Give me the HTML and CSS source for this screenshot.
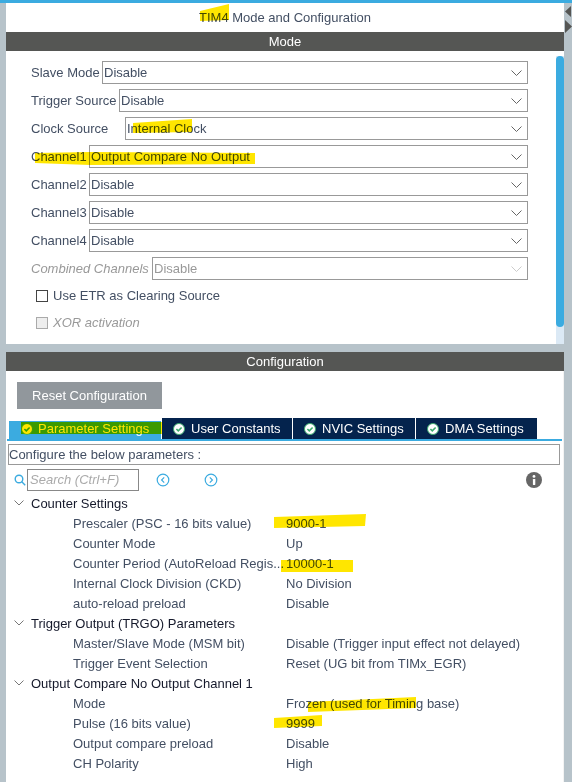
FILE: index.html
```html
<!DOCTYPE html>
<html lang="en">
<head>
    <meta charset="UTF-8">
    <title>TIM4 Mode and Configuration</title>
    <link rel="stylesheet" href="styles.css">
</head>
<body>
    <div class="page">
        <div class="main">
            <div class="title">TIM4 Mode and Configuration</div>
            <div class="bar">Mode</div>
            <div class="mode-panel">
                <div class="mode-form">
                    <div class="row"><span class="label l-slave">Slave Mode</span><div class="select">Disable<svg class="caret" viewBox="0 0 11 6"><path d="M.5.5l5 5 5-5"/></svg></div></div>
                    <div class="row"><span class="label l-trigger">Trigger Source</span><div class="select">Disable<svg class="caret" viewBox="0 0 11 6"><path d="M.5.5l5 5 5-5"/></svg></div></div>
                    <div class="row"><span class="label l-clock">Clock Source</span><div class="select">Internal Clock<svg class="caret" viewBox="0 0 11 6"><path d="M.5.5l5 5 5-5"/></svg></div></div>
                    <div class="row"><span class="label l-channel">Channel1</span><div class="select">Output Compare No Output<svg class="caret" viewBox="0 0 11 6"><path d="M.5.5l5 5 5-5"/></svg></div></div>
                    <div class="row"><span class="label l-channel">Channel2</span><div class="select">Disable<svg class="caret" viewBox="0 0 11 6"><path d="M.5.5l5 5 5-5"/></svg></div></div>
                    <div class="row"><span class="label l-channel">Channel3</span><div class="select">Disable<svg class="caret" viewBox="0 0 11 6"><path d="M.5.5l5 5 5-5"/></svg></div></div>
                    <div class="row"><span class="label l-channel">Channel4</span><div class="select">Disable<svg class="caret" viewBox="0 0 11 6"><path d="M.5.5l5 5 5-5"/></svg></div></div>
                    <div class="row row-off"><span class="label l-combined">Combined Channels</span><div class="select">Disable<svg class="caret" viewBox="0 0 11 6"><path d="M.5.5l5 5 5-5"/></svg></div></div>
                    <div class="check"><span class="box"></span>Use ETR as Clearing Source</div>
                    <div class="check check-off"><span class="box"></span>XOR activation</div>
                </div>
                <div class="scroll"><div class="thumb"></div></div>
            </div>
            <div class="bar bar-config">Configuration</div>
            <div class="config-panel">
                <button class="reset">Reset Configuration</button>
                <div class="tabs">
                    <div class="tab active"><svg class="ok" viewBox="0 0 12 12"><circle cx="6" cy="6" r="5.5"/><path d="M3.4 6l1.9 1.9 3.3-3.4"/></svg>Parameter Settings</div>
                    <div class="tab tab-user"><svg class="ok" viewBox="0 0 12 12"><circle cx="6" cy="6" r="5.5"/><path d="M3.4 6l1.9 1.9 3.3-3.4"/></svg>User Constants</div>
                    <div class="tab tab-nvic"><svg class="ok" viewBox="0 0 12 12"><circle cx="6" cy="6" r="5.5"/><path d="M3.4 6l1.9 1.9 3.3-3.4"/></svg>NVIC Settings</div>
                    <div class="tab tab-dma"><svg class="ok" viewBox="0 0 12 12"><circle cx="6" cy="6" r="5.5"/><path d="M3.4 6l1.9 1.9 3.3-3.4"/></svg>DMA Settings</div>
                </div>
                <div class="describe">Configure the below parameters :</div>
                <div class="search-row">
                    <svg class="lens" viewBox="0 0 12 12"><circle cx="5" cy="5" r="3.8"/><path d="M7.8 7.800l3.4 3.4"/></svg>
                    <div class="search">Search (Ctrl+F)</div>
                    <svg class="nav nav-prev" viewBox="0 0 14 14"><circle cx="7" cy="7" r="5.8"/><path d="M8.2 4.4L5.6 7l2.6 2.6"/></svg>
                    <svg class="nav nav-next" viewBox="0 0 14 14"><circle cx="7" cy="7" r="5.8"/><path d="M5.800 4.4L8.4 7 5.800 9.600"/></svg>
                    <svg class="info" viewBox="0 0 16 16"><circle cx="8" cy="8" r="8"/><rect x="6.9" y="7" width="2.4" height="6" rx=".4"/><circle class="dot" cx="8" cy="4.4" r="1.4"/></svg>
                </div>
                <div class="tree">
                    <div class="group"><svg class="fold" viewBox="0 0 10 6"><path d="M.5.5L5 5 9.500.5"/></svg>Counter Settings</div>
                    <div class="param"><span class="name">Prescaler (PSC - 16 bits value)</span><span>9000-1</span></div>
                    <div class="param"><span class="name">Counter Mode</span><span>Up</span></div>
                    <div class="param"><span class="name">Counter Period (AutoReload Regis...</span><span>10000-1</span></div>
                    <div class="param"><span class="name">Internal Clock Division (CKD)</span><span>No Division</span></div>
                    <div class="param"><span class="name">auto-reload preload</span><span>Disable</span></div>
                    <div class="group"><svg class="fold" viewBox="0 0 10 6"><path d="M.5.5L5 5 9.500.5"/></svg>Trigger Output (TRGO) Parameters</div>
                    <div class="param"><span class="name">Master/Slave Mode (MSM bit)</span><span>Disable (Trigger input effect not delayed)</span></div>
                    <div class="param"><span class="name">Trigger Event Selection</span><span>Reset (UG bit from TIMx_EGR)</span></div>
                    <div class="group"><svg class="fold" viewBox="0 0 10 6"><path d="M.5.5L5 5 9.500.5"/></svg>Output Compare No Output Channel 1</div>
                    <div class="param"><span class="name">Mode</span><span>Frozen (used for Timing base)</span></div>
                    <div class="param"><span class="name">Pulse (16 bits value)</span><span>9999</span></div>
                    <div class="param"><span class="name">Output compare preload</span><span>Disable</span></div>
                    <div class="param"><span class="name">CH Polarity</span><span>High</span></div>
                </div>
            </div>
        </div>
        <div class="side">
            <svg class="arrows" viewBox="0 0 8 30"><path d="M1 8.500L7 3v11zM1 17v13l7-6.500z"/></svg>
        </div>
    </div>

    <!-- marker strokes drawn over the screenshot -->
    <svg class="marker" viewBox="0 0 572 782">
        <polygon points="200,11 229,4 229,20 200,21"/>
        <polygon points="133,123 192,119 192,132 133,133"/>
        <polygon points="35,153 90,152 255,153 255,164 90,165 35,163"/>
        <polygon points="21,422 162,422 162,434 21,434"/>
        <polygon points="274,517 366,514 365,526 274,528"/>
        <polygon points="281,560 353,560 353,572 281,572"/>
        <polygon points="308,702 416,697 416,708 308,712"/>
        <polygon points="274,718 322,715 322,726 274,728"/>
    </svg>
</body>
</html>
```

FILE: styles.css
```css
* {
    box-sizing: border-box;
}
html, body {
    margin: 0;
    height: 782px;
    overflow: hidden;
}
body {
    position: relative;
    font-family: "Liberation Sans", Arial, sans-serif;
    font-size: 13px;
    color: #434f63;
    background: #b7c3ca;
}
.page {
    display: flex;
    height: 782px;
    padding-left: 6px;
    border-top: 3px solid #3babe0;
}
.main {
    flex: 1;
    min-width: 0;
}
.side {
    width: 8px;
}
.arrows {
    display: block;
    width: 8px;
    height: 30px;
    fill: #555654;
}
.title {
    height: 29px;
    line-height: 29px;
    text-align: center;
    background: #fff;
}
.bar {
    height: 19px;
    line-height: 19px;
    text-align: center;
    color: #fff;
    background: #555654;
}
.bar-config {
    margin-top: 8px;
}

/* top panel */
.mode-panel {
    display: flex;
    height: 293px;
    background: #fff;
}
.mode-form {
    flex: 1;
    padding: 10px 28px 0 25px;
}
.row {
    display: flex;
    align-items: center;
    height: 23px;
    margin-bottom: 5px;
}
.label {
    flex-shrink: 0;
    white-space: nowrap;
}
.l-slave {
    width: 71px;
}
.l-trigger {
    width: 88px;
}
.l-clock {
    width: 94px;
}
.l-channel {
    width: 58px;
}
.l-combined {
    width: 121px;
}
.select {
    flex: 1;
    display: flex;
    align-items: center;
    justify-content: space-between;
    height: 23px;
    padding: 0 5px 0 1px;
    border: 1px solid #999;
    white-space: nowrap;
}
.caret {
    width: 11px;
    height: 6px;
    fill: none;
    stroke: #666;
}
.row-off {
    margin-bottom: 2px;
}
.row-off .label {
    font-style: italic;
    color: #999;
}
.row-off .select {
    color: #999;
}
.row-off .caret {
    stroke: #ccc;
}
.check {
    display: flex;
    align-items: center;
    height: 27px;
    padding-left: 5px;
}
.check .box {
    width: 12px;
    height: 12px;
    margin-right: 5px;
    border: 1px solid #444;
}
.check-off {
    font-style: italic;
    color: #999;
}
.check-off .box {
    background: #eee;
    border-color: #aaa;
}
.scroll {
    width: 8px;
    padding-top: 5px;
    background: linear-gradient(#fff 5px, #dbe9f5 5px);
}
.thumb {
    height: 271px;
    background: #3babe0;
    border-radius: 4px;
}

/* bottom panel */
.config-panel {
    height: 411px;
    padding: 11px 3px 0 1px;
    background: #fff;
    border-right: 1px solid #f3f3f3;
}
.reset {
    display: block;
    width: 145px;
    height: 27px;
    margin: 0 0 9px 10px;
    padding: 0;
    border: 0;
    font: inherit;
    color: #fff;
    background: #91979c;
}
.tabs {
    display: flex;
    align-items: flex-end;
    height: 23px;
    padding-left: 2px;
    margin-right: -2px;
    border-bottom: 2px solid #3babe0;
}
.tab {
    display: flex;
    align-items: center;
    height: 21px;
    margin-right: 1px;
    padding-left: 11px;
    color: #fff;
    background: #04234d;
    white-space: nowrap;
}
.tab.active {
    width: 152px;
    height: 18px;
    padding: 0 0 3px 12px;
    background: #3babe0;
}
.tab.active .ok {
    margin-right: 5px;
}
.tab-user {
    width: 130px;
}
.tab-nvic {
    width: 122px;
}
.tab-dma {
    width: 121px;
}
.ok {
    width: 12px;
    height: 12px;
    margin-right: 6px;
    fill: #fff;
    stroke: #3cab6e;
}
.ok path {
    fill: none;
    stroke-width: 1.6;
}
.describe {
    height: 21px;
    line-height: 19px;
    margin: 3px 0 0 1px;
    border: 1px solid #999;
}
.search-row {
    display: flex;
    align-items: center;
    height: 22px;
    margin-top: 4px;
    padding-left: 7px;
}
.lens {
    width: 12px;
    height: 12px;
    margin-right: 1px;
    fill: none;
    stroke: #3babe0;
    stroke-width: 1.4;
}
.search {
    width: 112px;
    height: 22px;
    line-height: 20px;
    padding-left: 2px;
    border: 1px solid #888;
    font-style: italic;
    color: #aaa;
}
.nav {
    width: 14px;
    height: 14px;
    fill: none;
    stroke: #3babe0;
    stroke-width: 1.2;
}
.nav-prev {
    margin-left: 17px;
}
.nav-next {
    margin-left: 34px;
}
.info {
    width: 16px;
    height: 16px;
    margin-left: 308px;
    fill: #666;
}
.info rect, .info .dot {
    fill: #fff;
}
.tree {
    margin-top: 2px;
}
.group {
    display: flex;
    align-items: center;
    height: 20px;
    padding-left: 7px;
    color: #15192b;
}
.fold {
    width: 10px;
    height: 6px;
    margin-right: 7px;
    fill: none;
    stroke: #777;
}
.param {
    display: flex;
    align-items: center;
    height: 20px;
    padding-left: 66px;
    white-space: nowrap;
}
.name {
    width: 213px;
}

/* highlighter */
.marker {
    position: absolute;
    left: 0;
    top: 0;
    width: 572px;
    height: 782px;
    fill: #ffe600;
    mix-blend-mode: multiply;
}
```
